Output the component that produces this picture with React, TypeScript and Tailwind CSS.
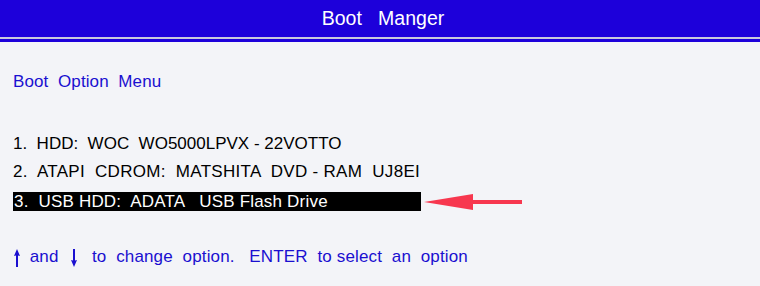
import React from 'react';

const ArrowUp: React.FC = () => (
  <svg width="6" height="18" viewBox="0 0 6 18" className="inline-block">
    <path d="M3 0 L6 7 L4 6.5 L4 18 L2 18 L2 6.5 L0 7 Z" fill="currentColor" />
  </svg>
);

const ArrowDown: React.FC = () => (
  <svg width="6" height="18" viewBox="0 0 6 18" className="inline-block">
    <path d="M3 18 L6 11 L4 11.5 L4 0 L2 0 L2 11.5 L0 11 Z" fill="currentColor" />
  </svg>
);

const App: React.FC = () => {
  return (
    <div className="w-[760px] h-[286px] bg-[#f3f4f8] font-['Liberation_Sans',Arial,sans-serif] overflow-hidden">
      {/* header */}
      <div className="h-[37px] bg-[#1d00da] flex items-center justify-center pl-[6px]">
        <span className="text-white text-[19.5px] whitespace-pre">Boot   Manger</span>
      </div>
      <div className="h-[2px] bg-[#c9c9dc]"></div>
      <div className="h-[3px] bg-[#1d00da]"></div>

      <div className="px-[13px]">
        <div className="mt-[30px] text-[17px] leading-[20px] text-[#1a0fd0] whitespace-pre tracking-[0.1px]">Boot  Option  Menu</div>

        <div className="mt-[42px] flex flex-col text-[17px] leading-[20px] text-black whitespace-pre">
          <div className="h-[28px]">1.  HDD:  WOC  WO5000LPVX - 22VOTTO</div>
          <div className="h-[27px] tracking-[0.3px]">2.  ATAPI  CDROM:  MATSHITA  DVD - RAM  UJ8EI</div>
          <div className="mt-[3px] flex items-center">
            <div className="w-[408px] h-[19px] bg-black text-white pl-px leading-[19px] tracking-[0.2px]">3.  USB HDD:  ADATA   USB Flash Drive</div>
            <svg width="100" height="16" viewBox="0 0 100 16" className="ml-[3px]">
              <polygon points="0,8 49,0 49,16" fill="#f7374f" />
              <rect x="48" y="6" width="50" height="4" fill="#f7374f" />
            </svg>
          </div>
        </div>

        <div className="mt-[36px] flex items-center text-[17px] leading-[20px] text-[#1a0fd0] whitespace-pre tracking-[0.15px]">
          <span className="ml-px"><ArrowUp /></span>
          <span>  and  </span>
          <span className="ml-[3px]"><ArrowDown /></span>
          <span>   to  change  option.   ENTER  to select  an  option</span>
        </div>
      </div>
    </div>
  );
};

export default App;
